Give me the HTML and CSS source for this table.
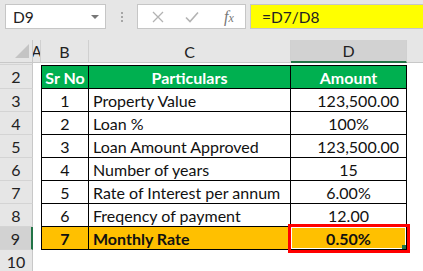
FILE: index.html
```html
<!DOCTYPE html>
<html>
<head>
<meta charset="utf-8">
<link rel="stylesheet" href="styles.css">
</head>
<body>
<div class="topbar">
  <div class="namebox"><span class="name">D9</span><span class="dd"></span></div>
  <div class="sep"><span></span><span></span><span></span></div>
  <div class="btns">
    <svg class="ic-x" width="12" height="12" viewBox="0 0 12 12"><path d="M1 1L11 11M11 1L1 11" stroke="#b3b3b3" stroke-width="1.3" fill="none"/></svg>
    <svg class="ic-ok" width="14" height="12" viewBox="0 0 14 12"><path d="M1 6.5L5 10.5L13 1.5" stroke="#b3b3b3" stroke-width="1.6" fill="none"/></svg>
    <span class="fx">f<span class="fxx">x</span></span>
  </div>
  <div class="formula">=D7/D8</div>
</div>
<div class="sheet">
  <div class="corner"><span class="tri"></span></div>
  <div class="ch cha">A</div>
  <div class="ch">B</div>
  <div class="ch">C</div>
  <div class="ch sel">D</div>
  <div class="ch rest"></div>

  <div class="rh r1"></div><div class="c r1"></div><div class="c r1"></div><div class="c r1"></div><div class="c r1"></div><div class="c r1"></div>

  <div class="rh">2</div><div class="c"></div>
  <div class="t hd b first top">Sr No</div><div class="t hd top">Particulars</div><div class="t hd top">Amount</div><div class="c"></div>

  <div class="rh">3</div><div class="c"></div>
  <div class="t b first">1</div><div class="t l">Property Value</div><div class="t r">123,500.00</div><div class="c"></div>

  <div class="rh">4</div><div class="c"></div>
  <div class="t b first">2</div><div class="t l">Loan %</div><div class="t m">100%</div><div class="c"></div>

  <div class="rh">5</div><div class="c"></div>
  <div class="t b first">3</div><div class="t l">Loan Amount Approved</div><div class="t r">123,500.00</div><div class="c"></div>

  <div class="rh">6</div><div class="c"></div>
  <div class="t b first">4</div><div class="t l">Number of years</div><div class="t m">15</div><div class="c"></div>

  <div class="rh">7</div><div class="c"></div>
  <div class="t b first">5</div><div class="t l">Rate of Interest per annum</div><div class="t m">6.00%</div><div class="c"></div>

  <div class="rh">8</div><div class="c"></div>
  <div class="t b first">6</div><div class="t l">Freqency of payment</div><div class="t m">12.00</div><div class="c"></div>

  <div class="rh selr">9</div><div class="c"></div>
  <div class="t b first or bold">7</div><div class="t l or bold">Monthly Rate</div><div class="t m or bold active">0.50%<span class="handle"></span></div><div class="c"></div>

  <div class="rh">10</div><div class="c"></div><div class="c"></div><div class="c"></div><div class="c"></div><div class="c"></div>
</div>
</body>
</html>
```
FILE: styles.css
```css
html, body {
  margin: 0;
  padding: 0;
  background: #ffffff;
  width: 423px;
  height: 271px;
  overflow: hidden;
  font-family: Lato, "Open Sans", sans-serif;
}

.topbar {
  height: 40px;
  background: #e6e6e6;
  display: flex;
  align-items: flex-start;
  padding-top: 4px;
  box-sizing: border-box;
}

.namebox {
  margin-left: 5px;
  width: 101px;
  height: 25px;
  box-sizing: border-box;
  background: #fff;
  border: 1px solid #c6c6c6;
  display: flex;
  align-items: center;
  justify-content: space-between;
  padding: 0 6px 0 7px;
  font-size: 15.5px;
  color: #222;
}

.dd {
  width: 0;
  height: 0;
  border-left: 4px solid transparent;
  border-right: 4px solid transparent;
  border-top: 4px solid #777;
}

.sep {
  width: 31px;
  height: 25px;
  display: flex;
  flex-direction: column;
  align-items: center;
  justify-content: center;
  gap: 2px;
}
.sep span {
  width: 2px;
  height: 2px;
  background: #a6a6a6;
}

.btns {
  width: 109px;
  height: 25px;
  box-sizing: border-box;
  background: #fff;
  border: 1px solid #c6c6c6;
  display: flex;
  align-items: center;
  padding-left: 14px;
}
.ic-x { margin-right: 21px; }
.ic-ok { margin-right: 25px; }
.fx {
  font-family: "Liberation Serif", serif;
  font-style: italic;
  font-size: 16px;
  color: #777;
}
.fxx { font-size: 12px; }

.formula {
  margin-left: 4px;
  flex: 1;
  height: 25px;
  box-sizing: border-box;
  background: #ffff00;
  border-top: 1px solid #c6c6c6;
  border-bottom: 1px solid #c6c6c6;
  border-left: 1px solid #c6c6c6;
  padding-left: 11px;
  display: flex;
  align-items: center;
  font-size: 15.5px;
  color: #222;
}

.sheet {
  display: grid;
  grid-template-columns: 33px 8px 48px 202px 116px 1fr;
  grid-template-rows: 23px 2px 24px repeat(7, 23px) 23px;
  font-size: 16px;
}

.corner {
  background: #e6e6e6;
  border-right: 1px solid #c8c8c8;
  border-bottom: 1px solid #c8c8c8;
  position: relative;
}
.tri {
  position: absolute;
  right: 3px;
  bottom: 4px;
  width: 0;
  height: 0;
  border-left: 14px solid transparent;
  border-bottom: 14px solid #c4c4c4;
}

.ch {
  background: #e6e6e6;
  border-right: 1px solid #d0d0d0;
  border-bottom: 1px solid #c8c8c8;
  display: flex;
  align-items: center;
  justify-content: center;
  color: #222;
  font-size: 16px;
  overflow: hidden;
}
.ch.cha {
  font-size: 15px;
}
.ch.sel {
  background: #d2d2d2;
  border-bottom: 2px solid #217346;
}
.ch.rest { border-right: none; }

.rh {
  background: #e6e6e6;
  border-right: 1px solid #c8c8c8;
  border-bottom: 1px solid #d4d4d4;
  display: flex;
  align-items: center;
  justify-content: center;
  color: #222;
  font-size: 16px;
}
.rh.selr {
  background: #d2d2d2;
  border-right: 2px solid #217346;
}

.c { background: #fff; }

.t {
  background: #fff;
  border-right: 1px solid #000;
  border-bottom: 1px solid #000;
  display: flex;
  align-items: center;
  justify-content: center;
  color: #111;
  white-space: nowrap;
  position: relative;
}
.t.first { border-left: 1px solid #000; }
.t.top { border-top: 1px solid #000; }
.t.l { justify-content: flex-start; padding-left: 4px; }
.t.r { justify-content: flex-end; padding-right: 7px; }
.t.hd {
  background: #00b050;
  color: #fff;
  font-weight: bold;
}
.t.or { background: #ffc000; }
.t.bold { font-weight: bold; }

.t.active {
  outline: 3px solid #ff0000;
  outline-offset: 0px;
  box-shadow: inset 0 0 0 1px #fff;
  z-index: 2;
}
.handle {
  position: absolute;
  right: 0;
  bottom: 0;
  width: 4px;
  height: 4px;
  background: #217346;
}
```
